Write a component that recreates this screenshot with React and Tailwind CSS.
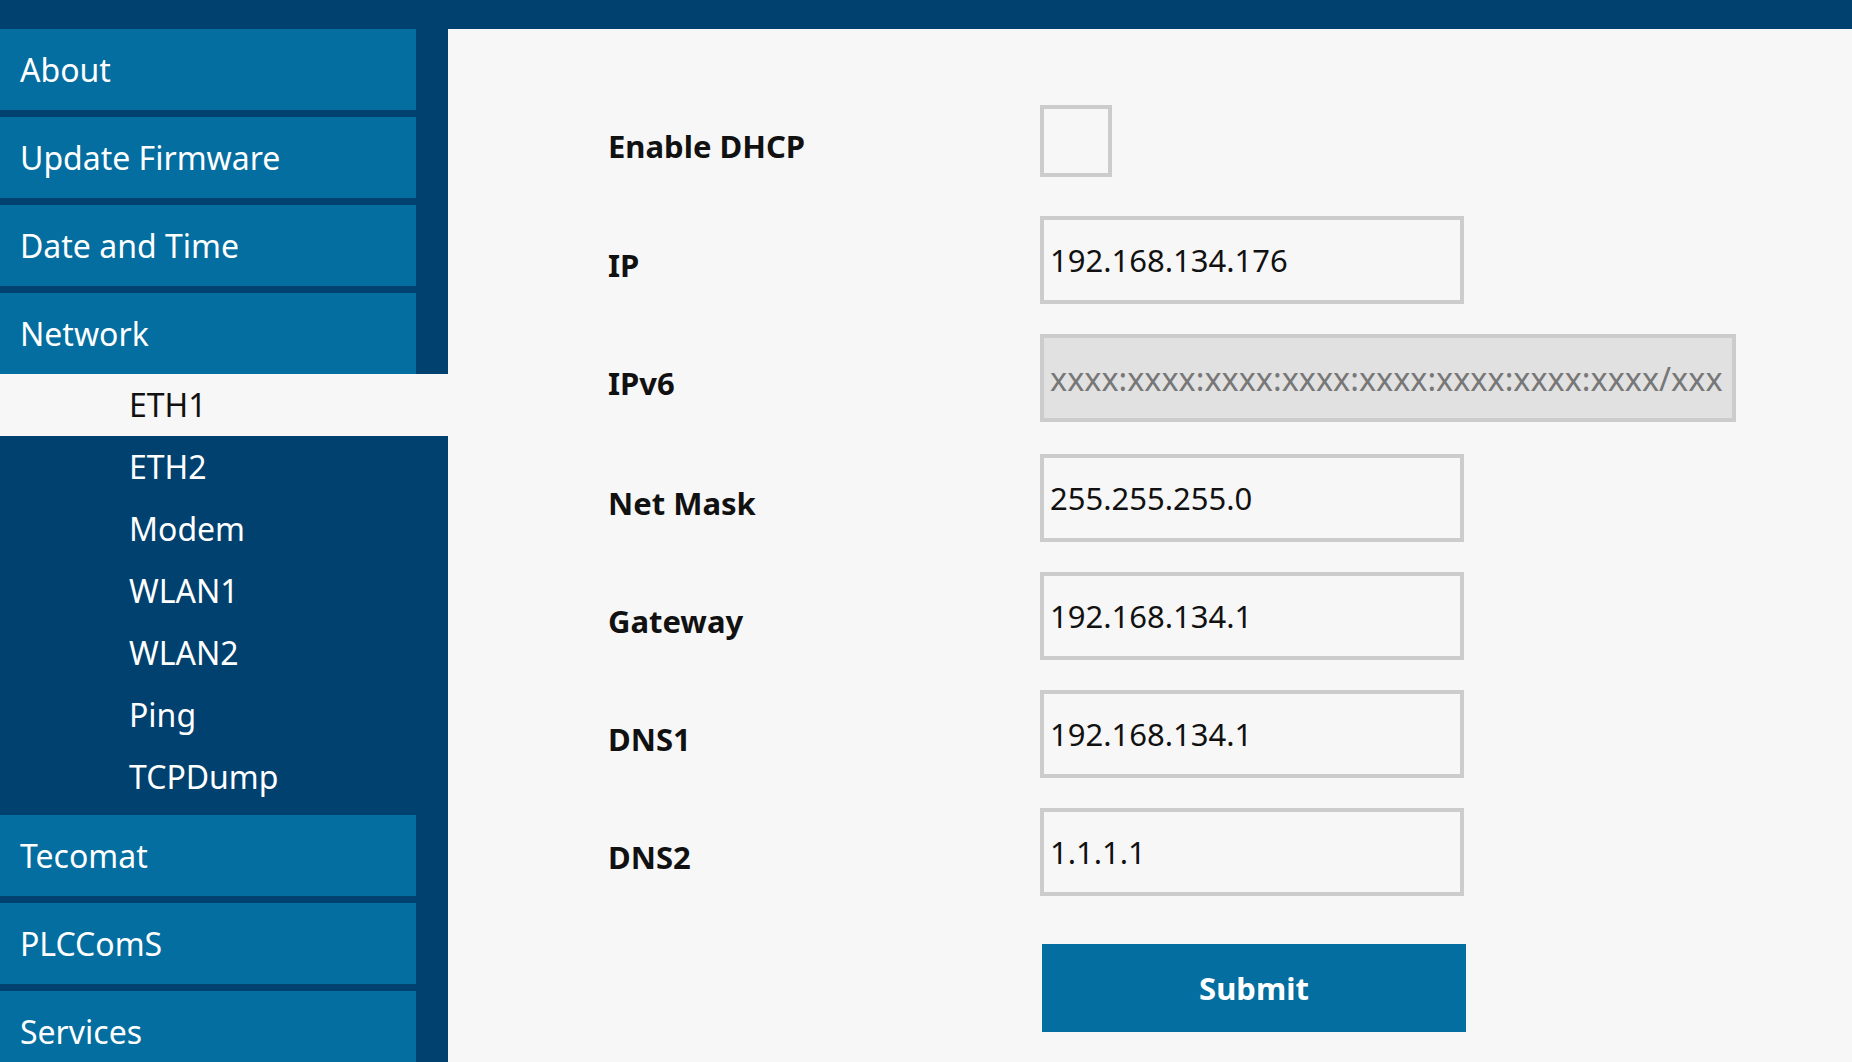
import React, { useState } from "react";

const topMenu = ["About", "Update Firmware", "Date and Time", "Network"];
const networkMenu = ["ETH1", "ETH2", "Modem", "WLAN1", "WLAN2", "Ping", "TCPDump"];
const bottomMenu = ["Tecomat", "PLCComS", "Services"];

function MenuItem({ label }) {
  return (
    <div className="h-[81px] mr-[32px] mb-[7px] bg-[#036e9f] flex items-center pl-[20px] text-white text-[32px] shrink-0">
      {label}
    </div>
  );
}

function Field({ label, value, disabled, placeholder, wide }) {
  return (
    <div className={`flex items-center h-[88px] ${wide ? "mb-[32px]" : "mb-[30px]"}`}>
      <label className="w-[432px] pt-[10px] font-bold text-[31px] text-[#111]">{label}</label>
      <input
        type="text"
        defaultValue={value}
        disabled={disabled}
        placeholder={placeholder}
        className={`h-[88px] border-4 border-[#cccccc] px-[6px] text-[#111] outline-none placeholder:text-[#777] ${
          wide ? "w-[696px] bg-[#e1e1e1] text-[32.4px]" : "w-[424px] bg-[#f7f7f7] text-[31px]"
        }`}
      />
    </div>
  );
}

export default function App() {
  const [active, setActive] = useState("ETH1");
  const [dhcp, setDhcp] = useState(false);

  return (
    <div className="h-screen w-full flex flex-col overflow-hidden bg-[#00416f] font-['Noto_Sans',sans-serif]">
      {/* top strip */}
      <div className="h-[29px] shrink-0 bg-[#00416f]" />

      <div className="flex flex-1 min-h-0">
        {/* sidebar */}
        <nav className="w-[448px] shrink-0 bg-[#00416f] flex flex-col">
          {topMenu.map((m) => (
            <MenuItem key={m} label={m} />
          ))}
          <div className="-mt-[7px] mb-[7px]">
            {networkMenu.map((s) => (
              <div
                key={s}
                onClick={() => setActive(s)}
                className={`h-[62px] flex items-center pl-[129px] text-[32px] cursor-pointer ${
                  active === s ? "bg-[#f7f7f7] text-[#111]" : "text-white"
                }`}
              >
                {s}
              </div>
            ))}
          </div>
          {bottomMenu.map((m) => (
            <MenuItem key={m} label={m} />
          ))}
        </nav>

        {/* network form */}
        <main className="flex-1 bg-[#f7f7f7] pl-[160px] pt-[76px]">
          <div className="flex items-center h-[72px] mb-[39px]">
            <label className="w-[432px] pt-[11px] font-bold text-[31px] text-[#111]">Enable DHCP</label>
            <button
              type="button"
              onClick={() => setDhcp(!dhcp)}
              className="w-[72px] h-[72px] border-4 border-[#cccccc] bg-[#f7f7f7] flex items-center justify-center text-[40px] text-[#036e9f]"
            >
              {dhcp ? "✓" : ""}
            </button>
          </div>

          <Field label="IP" value="192.168.134.176" />
          <Field label="IPv6" disabled wide placeholder="xxxx:xxxx:xxxx:xxxx:xxxx:xxxx:xxxx:xxxx/xxx" />
          <Field label="Net Mask" value="255.255.255.0" />
          <Field label="Gateway" value="192.168.134.1" />
          <Field label="DNS1" value="192.168.134.1" />
          <Field label="DNS2" value="1.1.1.1" />

          {/* sibling margins collapse, so this sets the whole gap */}
          <div className="flex mt-[48px]">
            <div className="w-[434px]" />
            <button
              type="button"
              className="w-[424px] h-[88px] bg-[#036e9f] text-white font-bold text-[31px]"
            >
              Submit
            </button>
          </div>
        </main>
      </div>
    </div>
  );
}
